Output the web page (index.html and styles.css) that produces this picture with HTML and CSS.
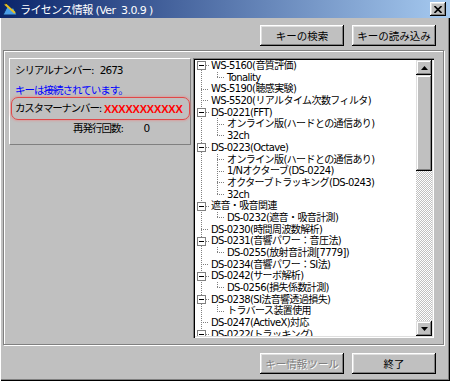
FILE: index.html
```html
<!doctype html>
<html lang="ja">
  <head>
    <meta charset="UTF-8" />
    <title>ライセンス情報</title>
    <link rel="stylesheet" href="styles.css">
  </head>
  <body>
    <div class="window">
      <div class="titlebar">
        <svg class="app-icon" width="16" height="16" viewBox="0 0 16 16">
          <path d="M1 14 L6 4 L9 9 L11 6 L15 14 Z" fill="#4a9ee8" stroke="#0b2a66" stroke-width="1"/>
          <path d="M3 3 L13 12" stroke="#e8c020" stroke-width="2"/>
          <path d="M3 3 L5 2" stroke="#222" stroke-width="1"/>
        </svg>
        <span class="title">ライセンス情報 (Ver  3.0.9 )</span>
        <span class="close">
          <svg width="8" height="7" viewBox="0 0 8 7">
            <path d="M0.5 0 L7.5 7 M7.5 0 L0.5 7" stroke="#000" stroke-width="1.6"/>
          </svg>
        </span>
      </div>

      <div class="toolbar">
        <button>キーの検索</button>
        <button>キーの読み込み</button>
      </div>

      <div class="frame">
        <div class="info">
          <div class="serial">シリアルナンバー: <span class="num">2673</span></div>
          <div class="status">キーは接続されています。</div>
          <div class="customer">カスタマーナンバー: <span class="cust-no">XXXXXXXXXXX</span></div>
          <div class="reissue">再発行回数: <span class="num">0</span></div>
        </div>

        <div class="tree">
          <div class="tree-list">
            <div class="node"><span class="toggle"><i class="box"></i></span><span>WS-5160(音質評価)</span></div>
            <div class="node"><span class="indent"></span><span class="elbow last"></span><span>Tonality</span></div>
            <div class="node"><span class="stub"></span><span>WS-5190(聴感実験)</span></div>
            <div class="node"><span class="stub"></span><span>WS-5520(リアルタイム次数フィルタ)</span></div>
            <div class="node"><span class="toggle"><i class="box"></i></span><span>DS-0221(FFT)</span></div>
            <div class="node"><span class="indent"></span><span class="elbow"></span><span>オンライン版(ハードとの通信あり)</span></div>
            <div class="node"><span class="indent"></span><span class="elbow last"></span><span>32ch</span></div>
            <div class="node"><span class="toggle"><i class="box"></i></span><span>DS-0223(Octave)</span></div>
            <div class="node"><span class="indent"></span><span class="elbow"></span><span>オンライン版(ハードとの通信あり)</span></div>
            <div class="node"><span class="indent"></span><span class="elbow"></span><span>1/Nオクターブ(DS-0224)</span></div>
            <div class="node"><span class="indent"></span><span class="elbow"></span><span>オクターブトラッキング(DS-0243)</span></div>
            <div class="node"><span class="indent"></span><span class="elbow last"></span><span>32ch</span></div>
            <div class="node"><span class="toggle"><i class="box"></i></span><span>遮音・吸音関連</span></div>
            <div class="node"><span class="indent"></span><span class="elbow last"></span><span>DS-0232(遮音・吸音計測)</span></div>
            <div class="node"><span class="stub"></span><span>DS-0230(時間周波数解析)</span></div>
            <div class="node"><span class="toggle"><i class="box"></i></span><span>DS-0231(音響パワー：音圧法)</span></div>
            <div class="node"><span class="indent"></span><span class="elbow last"></span><span>DS-0255(放射音計測[7779])</span></div>
            <div class="node"><span class="stub"></span><span>DS-0234(音響パワー：SI法)</span></div>
            <div class="node"><span class="toggle"><i class="box"></i></span><span>DS-0242(サーボ解析)</span></div>
            <div class="node"><span class="indent"></span><span class="elbow last"></span><span>DS-0256(損失係数計測)</span></div>
            <div class="node"><span class="toggle"><i class="box"></i></span><span>DS-0238(SI法音響透過損失)</span></div>
            <div class="node"><span class="indent"></span><span class="elbow last"></span><span>トラバース装置使用</span></div>
            <div class="node"><span class="stub"></span><span>DS-0247(ActiveX)対応</span></div>
            <div class="node"><span class="toggle"><i class="box"></i></span><span>DS-0222(トラッキング)</span></div>
          </div>
          <div class="scrollbar">
            <div class="sb-btn">
              <svg width="7" height="4" viewBox="0 0 7 4"><path d="M3.5 0 L7 4 H0 Z"/></svg>
            </div>
            <div class="thumb"></div>
            <div class="sb-btn down">
              <svg width="7" height="4" viewBox="0 0 7 4"><path d="M0 0 H7 L3.5 4 Z"/></svg>
            </div>
          </div>
        </div>
      </div>

      <div class="toolbar bottom">
        <button disabled>キー情報ツール</button>
        <button>終了</button>
      </div>
    </div>
  </body>
</html>
```

FILE: styles.css
```css
body {
  margin: 0;
  font-family: "DejaVu Sans", "Noto Sans CJK JP", sans-serif;
}
.window {
  width: 450px;
  height: 381px;
  box-sizing: border-box;
  background: #c0c0c0;
  box-shadow: inset 1px 0 #fff, inset -1px -1px #000, inset -2px -2px #808080;
  overflow: hidden;
}

/* title bar */
.titlebar {
  height: 18px;
  display: flex;
  align-items: center;
  padding: 0 4px 0 2px;
  background: linear-gradient(to right, #0a246a, #a6caf0);
  color: #fff;
  font-size: 11px;
}
.app-icon {
  flex: 0 0 16px;
}
.title {
  flex: 1;
  margin-left: 2px;
  white-space: pre;
  letter-spacing: -0.6px;
}
.close {
  width: 16px;
  height: 14px;
  display: flex;
  align-items: center;
  justify-content: center;
  background: #c0c0c0;
  box-shadow: inset -1px -1px #000, inset 1px 1px #fff, inset -2px -2px #808080, inset 2px 2px #dfdfdf;
}

/* buttons */
.toolbar {
  display: flex;
  justify-content: flex-end;
  gap: 8px;
  padding: 7px 14px 0 0;
}
.toolbar.bottom {
  padding-top: 8px;
}
button {
  width: 84px;
  height: 21px;
  padding: 0;
  border: 0;
  background: #c0c0c0;
  color: #000;
  font: 10.5px "Noto Sans CJK JP", sans-serif;
  box-shadow: inset -1px -1px #000, inset 1px 1px #fff, inset -2px -2px #808080, inset 2px 2px #dfdfdf;
}
button:disabled {
  color: #808080;
  text-shadow: 1px 1px #fff;
}

/* main group */
.frame {
  height: 295px;
  box-sizing: border-box;
  margin: 4px 6px 0 3px;
  padding: 7px 9px 6px 5px;
  border: 1px solid #808080;
  box-shadow: inset 1px 1px #fff, 1px 1px #fff;
  display: flex;
  align-items: flex-start;
  gap: 2px;
}

/* key info panel */
.info {
  flex: 0 0 182px;
  height: 87px;
  box-sizing: border-box;
  padding: 5px 0 0 5px;
  border: 1px solid;
  border-color: #fff #808080 #808080 #fff;
  font-size: 10.5px;
  line-height: 13px;
  letter-spacing: -1px;
  white-space: nowrap;
}
.serial .num {
  margin-left: 4px;
}
.status {
  margin-top: 7px;
  color: #0000ff;
}
.customer {
  height: 23px;
  box-sizing: border-box;
  margin-left: -4px;
  padding-left: 3px;
  display: flex;
  align-items: center;
  border: 1px solid #e04848;
  border-radius: 7px;
  box-shadow: 0 0 2px 1px rgba(235, 130, 130, 0.5);
  letter-spacing: -1.2px;
}
.cust-no {
  margin-left: 3px;
  color: #ff0000;
  font: bold 11px "Liberation Sans", sans-serif;
  letter-spacing: -0.2px;
}
.reissue {
  margin-top: 2px;
  padding-left: 58px;
}
.reissue .num {
  margin-left: 18px;
}

/* tree view */
.tree {
  flex: 1;
  height: 280px;
  box-sizing: border-box;
  padding: 2px;
  display: flex;
  background: #fff;
  box-shadow: inset 1px 1px #808080, inset 2px 2px #000, inset -1px -1px #fff, inset -2px -2px #dfdfdf;
}
.tree-list {
  flex: 1;
  overflow: hidden;
  background: repeating-linear-gradient(#808080 0 1px, transparent 1px 2px) 6px 6px / 1px 100% no-repeat;
}
.node {
  height: 11.7px;
  display: flex;
  align-items: center;
  font-size: 10px;
  line-height: 11.7px;
  letter-spacing: -0.6px;
  white-space: nowrap;
}
.toggle,
.stub,
.indent,
.elbow {
  flex: 0 0 16px;
  align-self: stretch;
}
.toggle {
  display: flex;
  align-items: center;
  background: repeating-linear-gradient(to right, #808080 0 1px, transparent 1px 2px) 11px 50% / 4px 1px no-repeat;
}
.box {
  width: 9px;
  height: 9px;
  box-sizing: border-box;
  margin-left: 2px;
  border: 1px solid #808080;
  background: #fff linear-gradient(#000, #000) center / 5px 1px no-repeat;
}
.stub {
  background: repeating-linear-gradient(to right, #808080 0 1px, transparent 1px 2px) 6px 50% / 8px 1px no-repeat;
}
.elbow {
  background:
    repeating-linear-gradient(#808080 0 1px, transparent 1px 2px) 6px 0 / 1px 100% no-repeat,
    repeating-linear-gradient(to right, #808080 0 1px, transparent 1px 2px) 6px 50% / 8px 1px no-repeat;
}
.elbow.last {
  background-size: 1px 50%, 8px 1px;
}

/* scrollbar */
.scrollbar {
  flex: 0 0 16px;
  display: flex;
  flex-direction: column;
  background: repeating-conic-gradient(#c0c0c0 0 25%, #fff 0 50%) 0 0 / 2px 2px;
}
.sb-btn {
  height: 15px;
  display: flex;
  align-items: center;
  justify-content: center;
  background: #c0c0c0;
  box-shadow: inset -1px -1px #000, inset 1px 1px #dfdfdf, inset -2px -2px #808080, inset 2px 2px #fff;
}
.sb-btn.down {
  margin-top: auto;
}
.thumb {
  height: 96px;
  background: #c0c0c0;
  box-shadow: inset -1px -1px #000, inset 1px 1px #dfdfdf, inset -2px -2px #808080, inset 2px 2px #fff;
}
```
